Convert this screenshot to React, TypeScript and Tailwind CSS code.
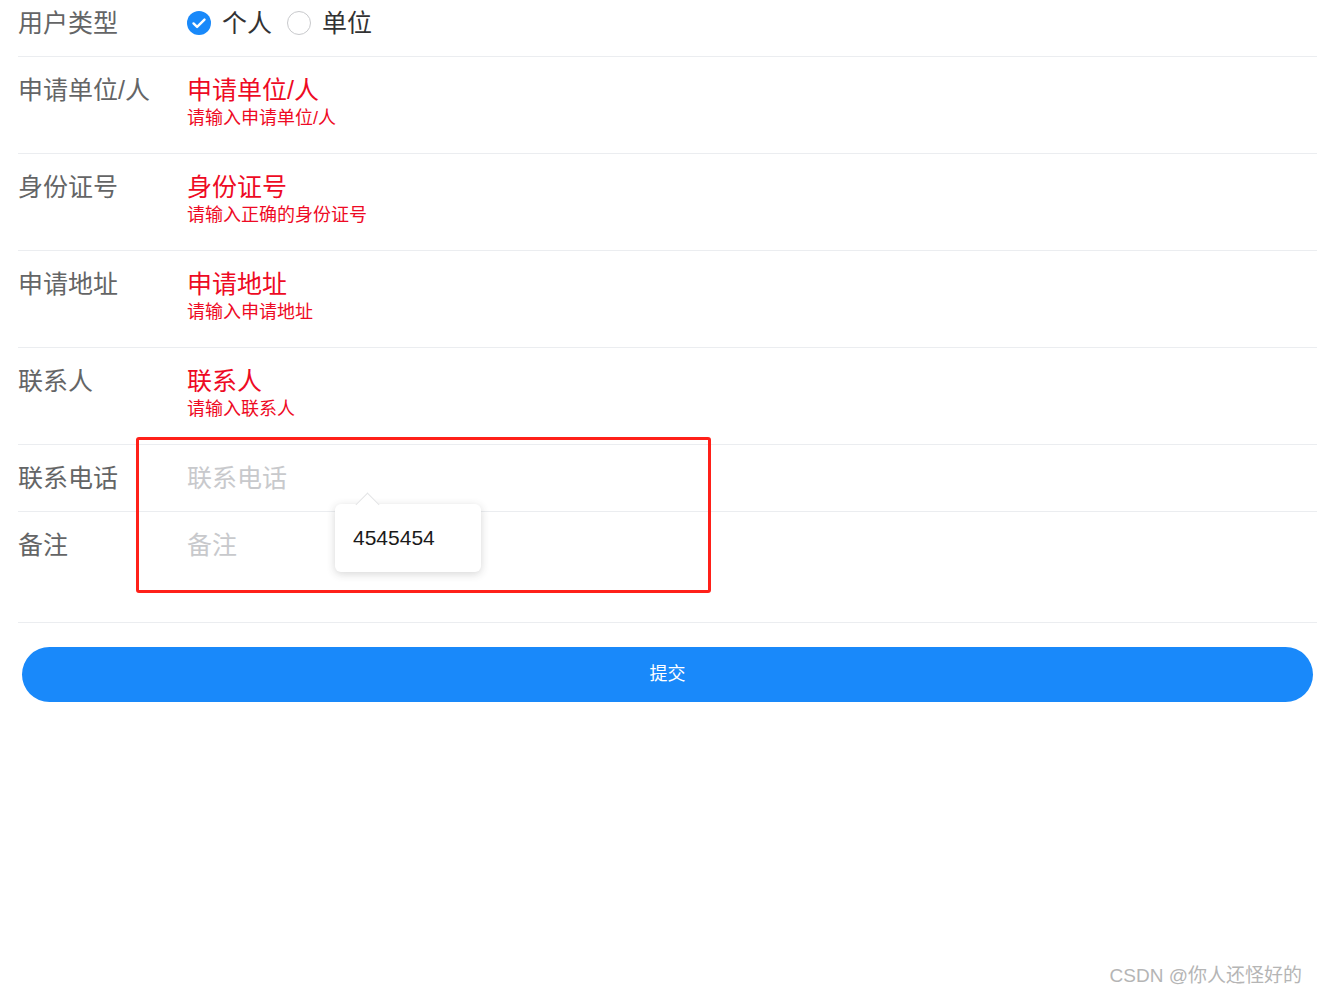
import React from "react";

const FONT = { fontFamily: '"Liberation Sans", "Noto Sans CJK SC", sans-serif' };

function Row({
  label,
  children,
  error,
}: {
  label: string;
  children: React.ReactNode;
  error?: string;
}) {
  return (
    <div className="ml-[18px] flex border-b border-[#ebedf0] pt-[16px]" style={{ paddingBottom: error ? 24 : 16 }}>
      <div className="w-[169px] shrink-0 text-[25px] leading-[34px] text-[#646566]">{label}</div>
      <div className="flex flex-col">
        <div className="text-[25px] leading-[34px]">{children}</div>
        {error && <div className="text-[18px] leading-[22px] text-[#ee0a24]">{error}</div>}
      </div>
    </div>
  );
}

function CheckedRadio() {
  return (
    <svg width="24" height="24" viewBox="0 0 24 24">
      <circle cx="12" cy="12" r="12" fill="#1989fa" />
      <path d="M6.5 12.4l3.6 3.5 7.4-7.3" fill="none" stroke="#fff" strokeWidth="2.4" strokeLinecap="round" strokeLinejoin="round" />
    </svg>
  );
}

export default function App() {
  return (
    <div className="relative min-h-[996px] w-full overflow-hidden bg-white" style={FONT}>
      <div className="mt-[-10px]">
        <Row label="用户类型">
          <div className="flex items-center text-[#323233]">
            <CheckedRadio />
            <span className="ml-[11px]">个人</span>
            <span className="ml-[15px] box-border h-[24px] w-[24px] rounded-full border border-[#c8c9cc]" />
            <span className="ml-[11px]">单位</span>
          </div>
        </Row>
        <Row label="申请单位/人" error="请输入申请单位/人">
          <span className="text-[#ee0a24]">申请单位/人</span>
        </Row>
        <Row label="身份证号" error="请输入正确的身份证号">
          <span className="text-[#ee0a24]">身份证号</span>
        </Row>
        <Row label="申请地址" error="请输入申请地址">
          <span className="text-[#ee0a24]">申请地址</span>
        </Row>
        <Row label="联系人" error="请输入联系人">
          <span className="text-[#ee0a24]">联系人</span>
        </Row>
        <Row label="联系电话">
          <span className="text-[#c8c9cc]">联系电话</span>
        </Row>
        <div className="ml-[18px] flex h-[111px] border-b border-[#ebedf0] pt-[16px]">
          <div className="w-[169px] shrink-0 text-[25px] leading-[34px] text-[#646566]">备注</div>
          <div className="text-[25px] leading-[34px] text-[#c8c9cc]">备注</div>
        </div>
        <div className="mt-[24px] ml-[22px] flex h-[55px] w-[1291px] items-center justify-center rounded-full bg-[#1989fa] text-[18px] text-white">
          提交
        </div>
      </div>

      {/* annotation rectangle */}
      <div className="absolute left-[136px] top-[437px] h-[156px] w-[575px] rounded-[3px] border-[3px] border-[#ff2019]" />

      {/* popover */}
      <div className="absolute left-[335px] top-[504px] h-[68px] w-[146px] rounded-[6px] bg-white shadow-[0_2px_8px_rgba(50,50,51,0.2)]">
        <div className="absolute left-[24px] top-[-8px] h-[17px] w-[17px] rotate-45 border-l border-t border-[#e3e4e6] bg-white" />
        <div className="relative flex h-full items-center pl-[18px] text-[21px] text-[#1a1a1a]">4545454</div>
      </div>

      {/* watermark */}
      <div className="absolute right-[15px] top-[964px] text-[19px] leading-[24px] text-[#b5b5b5]">CSDN @你人还怪好的</div>
    </div>
  );
}
